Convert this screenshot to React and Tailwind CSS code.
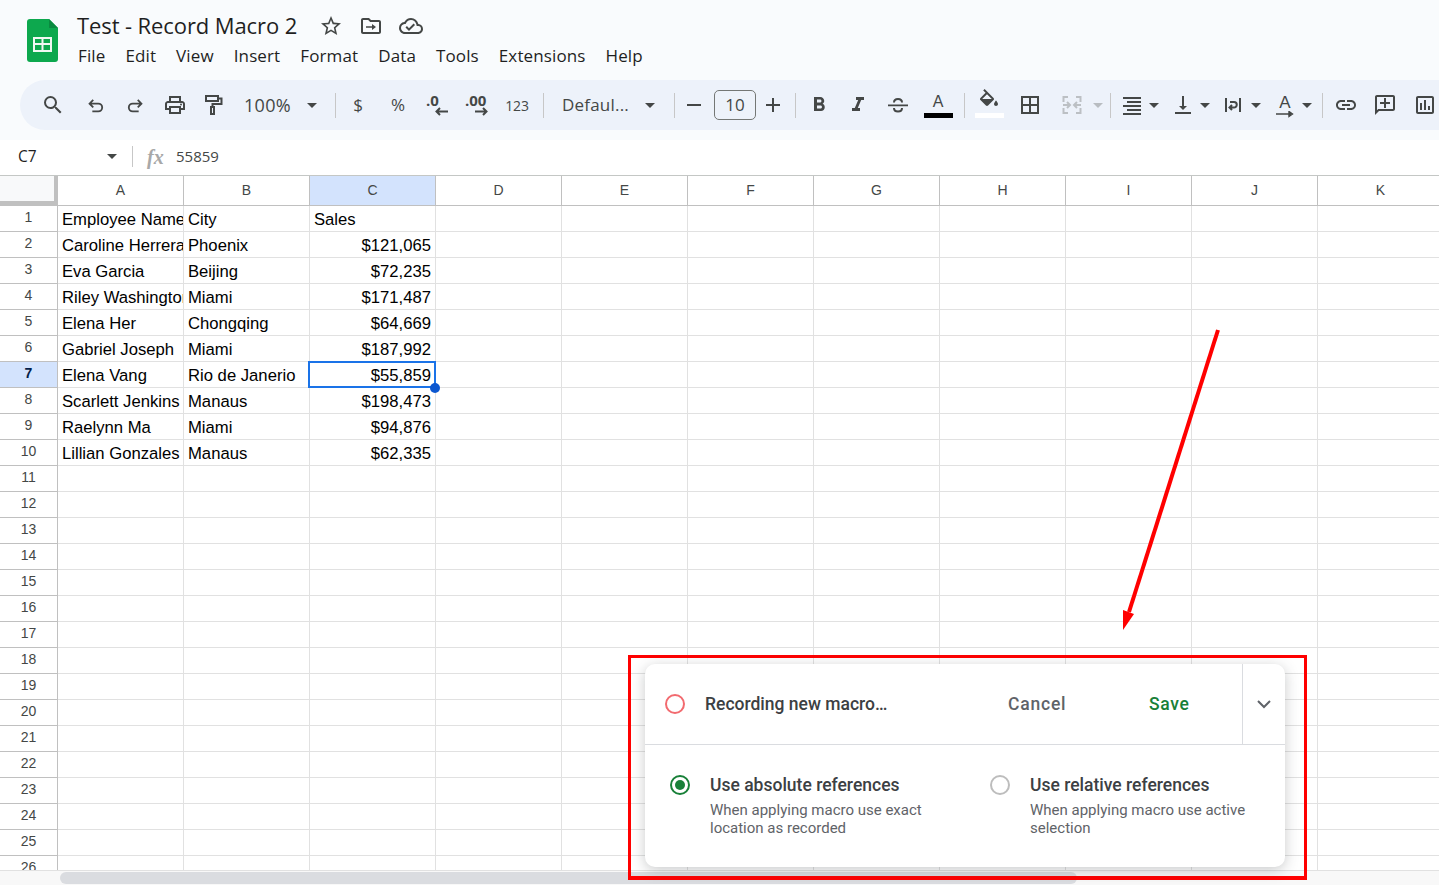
const stroke = { fill: "none", stroke: "currentColor", strokeWidth: 2 };

function I({ d, w = 24, h = 24, cls = "", children, vb = "0 0 24 24" }) {
  return (
    <svg width={w} height={h} viewBox={vb} fill="currentColor" className={cls}>
      {d && <path d={d} />}
      {children}
    </svg>
  );
}

function Slot({ cls, children }) {
  return <div className={"flex flex-none items-center justify-center h-[50px] text-[#444746] " + cls}>{children}</div>;
}

const Sep = ({ cls }) => <div className={"flex-none w-px h-[25px] bg-[#c7c7c7] " + cls} />;

const Caret = ({ color = "#444746" }) => (
  <svg width="10" height="5" viewBox="0 0 10 5"><path d="M0 0h10L5 5z" fill={color} /></svg>
);

function Toolbar() {
  return (
    <div className="flex items-center h-[50px] ml-[20px] w-[1440px] pl-[13px] rounded-l-[25px] bg-[#edf2fa] overflow-hidden font-['Open_Sans',sans-serif]">
      <Slot cls="w-[40px]"><I d="M15.5 14h-.79l-.28-.27A6.471 6.471 0 0 0 16 9.5 6.5 6.5 0 1 0 9.5 16c1.61 0 3.09-.59 4.23-1.57l.27.28v.79l5 4.99L20.49 19l-4.99-5zm-6 0C7.01 14 5 11.99 5 9.5S7.01 5 9.5 5 14 7.01 14 9.5 11.99 14 9.5 14z" /></Slot>
      <Slot cls="w-[40px] ml-[3px]"><I w={22} h={22}><path {...stroke} d="M9 6.5 5 10.5l4 4M5 10.5h9.5a4 4 0 0 1 0 8.5H8" /></I></Slot>
      <Slot cls="w-[38px]"><I w={22} h={22}><path {...stroke} d="M15 6.5l4 4-4 4M19 10.5H9.5a4 4 0 0 0 0 8.5H16" /></I></Slot>
      <Slot cls="w-[42px]"><I><path d="M19 8h-1V3H6v5H5c-1.66 0-3 1.34-3 3v6h4v4h12v-4h4v-6c0-1.66-1.34-3-3-3zM8 5h8v3H8V5zm8 12v2H8v-4h8v2zm2-2v-2H6v2H4v-4c0-.55.45-1 1-1h14c.55 0 1 .45 1 1v4h-2z" /><circle cx="18" cy="11.5" r="1" /></I></Slot>
      <Slot cls="w-[34px]"><I><path {...stroke} d="M5 3h12v5H5zM17 5.5h3.5v5.5H11.5v3M10 14h3v7h-3z" /></I></Slot>
      <Slot cls="w-[70px] pl-[14px] !justify-start text-[18px] tracking-[0.3px]">100%</Slot>
      <Slot cls="w-[24px]"><Caret /></Slot>
      <Sep cls="ml-[11px]" />
      <Slot cls="w-[44px] text-[17px]">$</Slot>
      <Slot cls="w-[36px] text-[17px]">%</Slot>
      <Slot cls="w-[42px]">
        <div className="relative w-[22px] h-[24px]">
          <span className="absolute left-0 top-[-4px] text-[15px] font-bold">.0</span>
          <svg className="absolute left-[9px] top-[14px]" width="13" height="9" viewBox="0 0 13 9"><path d="M5 1 1.5 4.5 5 8M2 4.5h11" fill="none" stroke="currentColor" strokeWidth="2" /></svg>
        </div>
      </Slot>
      <Slot cls="w-[38px]">
        <div className="relative w-[24px] h-[24px]">
          <span className="absolute left-0 top-[-4px] text-[15px] font-bold">.00</span>
          <svg className="absolute left-[10px] top-[14px]" width="13" height="9" viewBox="0 0 13 9"><path d="M8 1l3.5 3.5L8 8M0 4.5h11" fill="none" stroke="currentColor" strokeWidth="2" /></svg>
        </div>
      </Slot>
      <Slot cls="w-[42px] text-[14px] tracking-[-0.2px]">123</Slot>
      <Sep cls="ml-[5px]" />
      <Slot cls="w-[92px] pl-[18px] !justify-start text-[17px] tracking-[0.2px]">Defaul...</Slot>
      <Slot cls="w-[28px]"><Caret /></Slot>
      <Sep cls="ml-[10px]" />
      <Slot cls="w-[38px]"><div className="w-[14px] h-[2px] bg-[#444746]" /></Slot>
      <div className="flex-none flex items-center justify-center w-[42px] h-[30px] ml-px rounded-[5px] border border-[#747775] text-[17px] text-[#444746]">10</div>
      <Slot cls="w-[34px]"><I d="M19 13h-6v6h-2v-6H5v-2h6V5h2v6h6z" /></Slot>
      <Sep cls="ml-[5px]" />
      <Slot cls="w-[46px]"><I d="M15.6 10.79c.97-.67 1.65-1.77 1.65-2.79 0-2.26-1.75-4-4-4H7v14h7.04c2.09 0 3.71-1.7 3.71-3.79 0-1.52-.86-2.82-2.15-3.42zM10 6.5h3c.83 0 1.5.67 1.5 1.5s-.67 1.5-1.5 1.5h-3v-3zm3.5 9H10v-3h3.5c.83 0 1.5.67 1.5 1.5s-.67 1.5-1.5 1.5z" /></Slot>
      <Slot cls="w-[32px]"><I d="M10 4v3h2.21l-3.42 8H6v3h8v-3h-2.21l3.42-8H18V4z" /></Slot>
      <Slot cls="w-[48px]"><I><path {...stroke} d="M8 9.5C8 7 10 6 12 6s4 1 4 3.5M8 15c0 2.5 2 3.5 4 3.5s4-1 4-3.5" /><path d="M2 11.5h20v1.8H2z" /></I></Slot>
      <Slot cls="w-[32px]">
        <div className="flex flex-col items-center pt-[2px]">
          <span className="text-[16px] leading-[16px] font-['Liberation_Sans',sans-serif]">A</span>
          <div className="w-[29px] h-[5px] mt-[3px] bg-black" />
        </div>
      </Slot>
      <Sep cls="ml-[10px]" />
      <Slot cls="w-[48px]">
        <div className="flex flex-col items-center">
          <I cls="mt-[-4px]"><path fillRule="evenodd" d="M16.56 8.94 7.62 0 6.21 1.41l2.38 2.38-5.15 5.15c-.59.59-.59 1.54 0 2.12l5.5 5.5c.29.29.68.44 1.06.44s.77-.15 1.06-.44l5.5-5.5c.59-.58.59-1.53 0-2.12zM5.21 10 10 5.21 14.79 10H5.21zM19 11.5s-2 2.17-2 3.5c0 1.1.9 2 2 2s2-.9 2-2c0-1.33-2-3.5-2-3.5z" /></I>
          <div className="w-[29px] h-[5px] bg-white" />
        </div>
      </Slot>
      <Slot cls="w-[34px]"><I d="M3 3v18h18V3H3zm8 16H5v-6h6v6zm0-8H5V5h6v6zm8 8h-6v-6h6v6zm0-8h-6V5h6v6z" /></Slot>
      <Slot cls="w-[40px] ml-[5px] !text-[#bcc0c4]"><I><path {...stroke} d="M8 4H3.5v5M3.5 15v5H8M16 4h4.5v5M20.5 15v5H16M3 12h6.5M7 9l3 3-3 3M21 12h-6.5M17 9l-3 3 3 3" /></I></Slot>
      <Slot cls="w-[12px]"><Caret color="#b9bdc1" /></Slot>
      <Sep cls="ml-[6px]" />
      <Slot cls="w-[28px] ml-[7px]"><I><path d="M3 4h18v2H3zM7 8h14v2H7zM3 12h18v2H3zM7 16h14v2H7zM3 20h18v2H3z" /></I></Slot>
      <Slot cls="w-[16px]"><Caret /></Slot>
      <Slot cls="w-[28px] ml-[7px]"><I d="M16 13h-3V3h-2v10H8l4 4 4-4zM4 19v2h16v-2H4z" /></Slot>
      <Slot cls="w-[16px]"><Caret /></Slot>
      <Slot cls="w-[28px] ml-[6px]"><I><path d="M4 5h2v14H4zM18 5h2v14h-2z" /><path {...stroke} d="M11 17l-2.5-2.5L11 12M8.5 14.5H13a2.6 2.6 0 0 0 0-5.5H9" /></I></Slot>
      <Slot cls="w-[16px] ml-px"><Caret /></Slot>
      <Slot cls="w-[28px] ml-[7px]">
        <div className="flex flex-col items-center pt-[2px]">
          <span className="text-[17px] leading-[16px] font-['Liberation_Sans',sans-serif]">A</span>
          <svg width="18" height="7" viewBox="0 0 18 7"><path d="M0 3h15M13 .5l3.5 2.5L13 5.5z" fill="currentColor" stroke="currentColor" strokeWidth="1.4" /></svg>
        </div>
      </Slot>
      <Slot cls="w-[16px]"><Caret /></Slot>
      <Sep cls="ml-[7px]" />
      <Slot cls="w-[28px] ml-[9px]"><I d="M3.9 12c0-1.71 1.39-3.1 3.1-3.1h4V7H7c-2.76 0-5 2.24-5 5s2.24 5 5 5h4v-1.9H7c-1.71 0-3.1-1.39-3.1-3.1zM8 13h8v-2H8v2zm9-6h-4v1.9h4c1.71 0 3.1 1.39 3.1 3.1s-1.39 3.1-3.1 3.1h-4V17h4c2.76 0 5-2.24 5-5s-2.24-5-5-5z" /></Slot>
      <Slot cls="w-[28px] ml-[11px]"><I d="M20 2H4c-1.1 0-2 .9-2 2v18l4-4h14c1.1 0 2-.9 2-2V4c0-1.1-.9-2-2-2zm0 14H5.17L4 17.17V4h16v12zm-7-11h-2v4H7v2h4v4h2v-4h4V9h-4z" /></Slot>
      <Slot cls="w-[28px] ml-[12px]"><I d="M19 3H5c-1.1 0-2 .9-2 2v14c0 1.1.9 2 2 2h14c1.1 0 2-.9 2-2V5c0-1.1-.9-2-2-2zm0 16H5V5h14v14zM7 10h2v7H7zm4-3h2v10h-2zm4 6h2v4h-2z" /></Slot>
    </div>
  );
}

function Header() {
  return (
    <div className="flex-none h-[140px] bg-[#f9fbfd] font-['Open_Sans',sans-serif]">
      <div className="flex h-[80px]">
        <svg width="31" height="43" viewBox="0 0 31 43" className="ml-[27px] mt-[19px] flex-none">
          <path d="M3 0h19l9 9v31a3 3 0 0 1-3 3H3a3 3 0 0 1-3-3V3a3 3 0 0 1 3-3z" fill="#0da84e" />
          <path d="M22 0l9 9h-9z" fill="#0a8a40" />
          <path d="M6 18h19v15H6zm2 2v4h6.5v-4zm8.5 0v4H23v-4zM8 26v5h6.5v-5zm8.5 0v5H23v-5z" fill="#f1f8f3" fillRule="evenodd" />
        </svg>
        <div className="ml-[19px] pt-[9px]">
          <div className="flex items-center h-[32px]">
            <span className="text-[22px] leading-[32px] text-[#1f1f1f] tracking-[-0.1px]">Test - Record Macro 2</span>
            <I cls="ml-[22px] mt-[2px] text-[#444746]" d="M22 9.24l-7.19-.62L12 2 9.19 8.63 2 9.24l5.46 4.73L5.82 21 12 17.27 18.18 21l-1.63-7.03L22 9.24zM12 15.4l-3.76 2.27 1-4.28-3.32-2.88 4.38-.38L12 6.1l1.71 4.04 4.38.38-3.32 2.88 1 4.28L12 15.4z" />
            <I cls="ml-[16px] mt-[2px] text-[#444746]"><path d="M20 6h-8l-2-2H4c-1.1 0-1.99.9-1.99 2L2 18c0 1.1.9 2 2 2h16c1.1 0 2-.9 2-2V8c0-1.1-.9-2-2-2zm0 12H4V6h5.17l2 2H20v10z" /><path d="M7 12.2h6V10l4 3-4 3v-2.2H7z" /></I>
            <I cls="ml-[16px] mt-[2px] text-[#444746]" d="M19.35 10.04A7.49 7.49 0 0 0 12 4C9.11 4 6.6 5.64 5.35 8.04A5.994 5.994 0 0 0 0 14c0 3.31 2.69 6 6 6h13c2.76 0 5-2.24 5-5 0-2.64-2.05-4.78-4.65-4.96zM19 18H6c-2.21 0-4-1.79-4-4 0-2.05 1.53-3.76 3.56-3.97l1.07-.11.5-.95A5.469 5.469 0 0 1 12 6c2.62 0 4.88 1.86 5.39 4.43l.3 1.5 1.53.11A2.98 2.98 0 0 1 22 15c0 1.65-1.35 3-3 3zm-9-3.82l-2.09-2.09L6.5 13.5 10 17l6.01-6.01-1.41-1.41z" />
          </div>
          <div className="flex gap-[20px] ml-px mt-[2px] text-[17px] leading-[26px] text-[#1f1f1f] tracking-[0.12px]">
            {["File", "Edit", "View", "Insert", "Format", "Data", "Tools", "Extensions", "Help"].map((m) => (
              <span key={m}>{m}</span>
            ))}
          </div>
        </div>
      </div>
      <Toolbar />
    </div>
  );
}

function FormulaBar() {
  return (
    <div className="flex-none flex items-center h-[36px] pb-[2px] border-b border-[#c4c7c5] font-['Open_Sans',sans-serif] text-[15px] text-[#444746]">
      <span className="ml-[18px] w-[89px] text-[#1f1f1f] text-[15.5px]">C7</span>
      <Caret />
      <div className="ml-[15px] w-px h-[21px] bg-[#c7c7c7]" />
      <span className="ml-[14px] w-[29px] font-['Liberation_Serif',serif] italic font-bold text-[20px] text-[#a8a8a8]">fx</span>
      <span>55859</span>
    </div>
  );
}

const cols = ["A", "B", "C", "D", "E", "F", "G", "H", "I", "J", "K"];
const data = [
  ["Employee Name", "City", "Sales", false],
  ["Caroline Herrera", "Phoenix", "$121,065", true],
  ["Eva Garcia", "Beijing", "$72,235", true],
  ["Riley Washington", "Miami", "$171,487", true],
  ["Elena Her", "Chongqing", "$64,669", true],
  ["Gabriel Joseph", "Miami", "$187,992", true],
  ["Elena Vang", "Rio de Janerio", "$55,859", true],
  ["Scarlett Jenkins", "Manaus", "$198,473", true],
  ["Raelynn Ma", "Miami", "$94,876", true],
  ["Lillian Gonzales", "Manaus", "$62,335", true],
];

function Row({ n }) {
  const r = data[n - 1];
  const sel = n === 7;
  return (
    <div className="flex h-[26px] flex-none">
      <div className={"flex-none w-[58px] pt-[1px] border-r border-b border-r-[#c0c0c0] border-b-[#c0c0c0] text-center text-[14px] leading-[20px] " + (sel ? "bg-[#d3e3fd] font-bold text-[#041e49]" : "text-[#444746]")}>{n}</div>
      {cols.map((c, i) => (
        <div key={c} className={"relative flex-none w-[126px] pl-[4px] border-r border-b border-[#e1e1e1] text-[16.67px] leading-[25px] text-black whitespace-nowrap " + (i === 2 && r && r[3] ? "text-right pr-[4px]" : "")}>
          {r && i < 3 ? (
            <span className="block overflow-hidden pt-px">{r[i]}</span>
          ) : null}
          {sel && i === 2 && (
            <div className="absolute left-[-2px] top-[-1px] w-[128px] h-[27px] border-2 border-[#1a73e8] z-10">
              <div className="absolute right-[-6px] bottom-[-7px] w-[10px] h-[10px] rounded-full bg-[#0b57d0]" />
            </div>
          )}
        </div>
      ))}
    </div>
  );
}

function Grid() {
  return (
    <div className="flex-1 min-h-0 overflow-hidden flex flex-col font-['Liberation_Sans',sans-serif]">
      <div className="flex flex-none h-[30px]">
        <div className="flex-none w-[58px] bg-[#f8f9fa] border-r-[4px] border-b-[5px] border-[#c0c0c0]" />
        {cols.map((c) => (
          <div key={c} className={"flex-none w-[126px] flex items-center justify-center border-r border-b border-[#c0c0c0] text-[14px] text-[#444746] " + (c === "C" ? "bg-[#d3e3fd]" : "")}>{c}</div>
        ))}
      </div>
      {Array.from({ length: 26 }, (_, i) => <Row key={i} n={i + 1} />)}
    </div>
  );
}

function Radio({ on, children, sub }) {
  return (
    <div className="flex flex-none w-[320px]">
      <div className={"flex-none flex items-center justify-center w-[20px] h-[20px] mt-[10px] rounded-full border-2 " + (on ? "border-[#188038]" : "border-[#bdbdbd]")}>
        {on && <div className="w-[10px] h-[10px] rounded-full bg-[#188038]" />}
      </div>
      <div className="ml-[20px] w-[240px]">
        <div className="text-[17.5px] leading-[22px] font-medium text-[#3c4043] mt-[9px]">{children}</div>
        <div className="text-[15px] leading-[18px] text-[#5f6368] mt-[5px]">{sub}</div>
      </div>
    </div>
  );
}

function Macro() {
  return (
    <div className="absolute left-[628px] top-[655px] w-[679px] h-[225px] border-x-[3px] border-t-[3px] border-b-[4px] border-[#ff0000] z-20 font-['Roboto',sans-serif]">
      <div className="ml-[14px] mt-[6px] w-[640px] h-[203px] rounded-[10px] bg-white shadow-[0_3px_14px_rgba(60,64,67,0.28)]">
        <div className="flex items-center h-[81px] border-b border-[#dadce0]">
          <div className="ml-[20px] w-[20px] h-[20px] rounded-full border-2 border-[#f26a6f]" />
          <span className="ml-[20px] w-[303px] text-[17.5px] font-medium text-[#3c4043]">Recording new macro…</span>
          <span className="w-[141px] text-[17.5px] font-medium text-[#5f6368] tracking-[0.8px]">Cancel</span>
          <span className="w-[93px] text-[17.5px] font-medium text-[#188038] tracking-[0.7px]">Save</span>
          <div className="flex items-center justify-center w-[43px] h-full border-l border-[#dadce0]">
            <svg width="14" height="9" viewBox="0 0 14 9"><path d="M1 1l6 6 6-6" fill="none" stroke="#5f6368" strokeWidth="2" /></svg>
          </div>
        </div>
        <div className="flex pt-[20px] pl-[25px]">
          <Radio on sub="When applying macro use exact location as recorded">Use absolute references</Radio>
          <Radio sub="When applying macro use active selection">Use relative references</Radio>
        </div>
      </div>
    </div>
  );
}

export default function App() {
  return (
    <div className="relative flex flex-col w-[1439px] h-[885px] overflow-hidden bg-white">
      <Header />
      <FormulaBar />
      <Grid />
      <div className="flex-none flex items-center h-[15px] bg-[#f8f8f8] border-t border-[#e1e1e1] pl-[60px]">
        <div className="w-[1017px] h-[12px] rounded-full bg-[#dadce0]" />
      </div>
      <Macro />
      <svg className="absolute left-[1110px] top-[320px] z-20" width="120" height="320" viewBox="0 0 120 320">
        <path d="M108 10 19 292" stroke="#ff0000" strokeWidth="4" fill="none" />
        <path d="M13 310V290l11 4z" fill="#ff0000" />
      </svg>
    </div>
  );
}
